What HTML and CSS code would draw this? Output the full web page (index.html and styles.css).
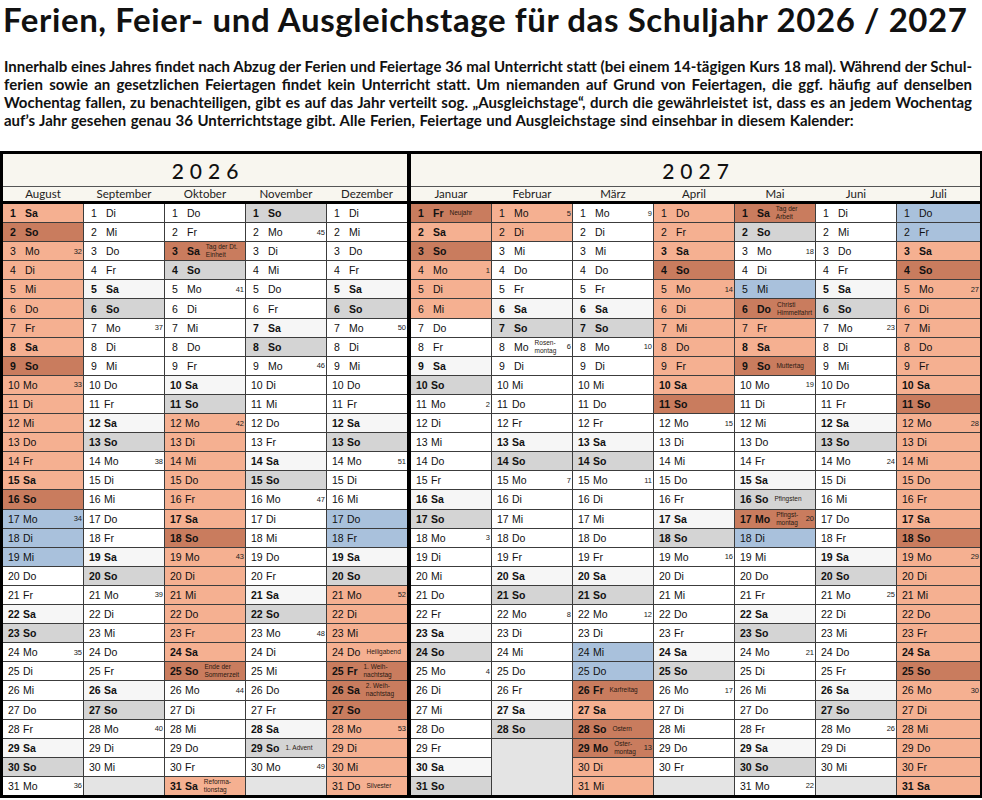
FILE: index.html
```html
<!DOCTYPE html>
<html lang="de">
<head>
<meta charset="utf-8">
<title>Ferien, Feier- und Ausgleichstage 2026 / 2027</title>
<link rel="stylesheet" href="styles.css">
</head>
<body>
<header class="intro">
  <h1 class="title">Ferien, Feier- und Ausgleichstage für das Schuljahr 2026 / 2027</h1>
  <p class="lead">
    <span class="jl">Innerhalb eines Jahres findet nach Abzug der Ferien und Feiertage 36 mal Unterricht statt (bei einem 14-tägigen Kurs 18 mal). Während der Schul-</span>
    <span class="jl">ferien sowie an gesetzlichen Feiertagen findet kein Unterricht statt. Um niemanden auf Grund von Feiertagen, die ggf. häufig auf denselben</span>
    <span class="jl">Wochentag fallen, zu benachteiligen, gibt es auf das Jahr verteilt sog. „Ausgleichstage“, durch die gewährleistet ist, dass es an jedem Wochentag</span>
    <span class="ll">auf’s Jahr gesehen genau 36 Unterrichtstage gibt. Alle Ferien, Feiertage und Ausgleichstage sind einsehbar in diesem Kalender:</span>
  </p>
</header>
<main class="cal">
  <section class="year y26">
    <div class="yh">2026</div>
    <div class="mh">
      <div>August</div><div>September</div><div>Oktober</div><div>November</div><div>Dezember</div>
    </div>
    <div class="days" data-months="2026-8,2026-9,2026-10,2026-11,2026-12"></div>
  </section>
  <section class="year y27">
    <div class="yh">2027</div>
    <div class="mh">
      <div>Januar</div><div>Februar</div><div>März</div><div>April</div><div>Mai</div><div>Juni</div><div>Juli</div>
    </div>
    <div class="days" data-months="2027-1,2027-2,2027-3,2027-4,2027-5,2027-6,2027-7"></div>
  </section>
</main>
<script src="script.js"></script>
</body>
</html>
```

FILE: styles.css
```css
html, body {
  margin: 0;
  padding: 0;
  background: #fff;
}
body {
  width: 982px;
  color: #111;
  font-family: "Lato", "Liberation Sans", sans-serif;
}
.intro {
  padding: 0 10px 0 3px;
}
.title {
  margin: 0;
  font-size: 33px;
  line-height: 38px;
  letter-spacing: 0.6px;
  font-weight: 700;
  white-space: nowrap;
}
.lead {
  margin: 19px 0 0 1px;
  font-size: 15px;
  line-height: 18px;
  font-weight: 700;
}
.jl {
  display: block;
  text-align: justify;
  text-align-last: justify;
}
.ll {
  display: block;
  word-spacing: 0.8px;
}
.cal {
  margin-top: 22px;
  display: flex;
  gap: 4px;
  box-sizing: border-box;
  width: 982px;
  border: 3px solid #000;
  border-right-width: 2px;
  background: #000;
}
.year {
  display: flex;
  flex-direction: column;
}
.y26 { width: 404px; }
.y27 { flex: 1; }
.yh {
  height: 32px;
  background: #f8f6ef;
  border-bottom: 1px solid #555;
  display: flex;
  align-items: center;
  justify-content: center;
  font-size: 21px;
  font-weight: 500;
  letter-spacing: 6px;
  padding-left: 6px;
  color: #111;
}
.mh {
  height: 14px;
  background: #f8f6ef;
  border-bottom: 3px solid #000;
  display: grid;
  column-gap: 1px;
  font-size: 11.5px;
  line-height: 14px;
  color: #222;
}
.mh div { text-align: center; }
.y26 .mh, .y26 .days { grid-template-columns: repeat(5, 1fr); }
.y27 .mh, .y27 .days { grid-template-columns: repeat(6, 80px) 1fr; }
.days {
  display: grid;
  grid-template-rows: repeat(31, 1fr);
  grid-auto-flow: column;
  gap: 1px;
  height: 591px;
  background: #3c3c3c;
}
.c {
  display: flex;
  align-items: center;
  padding-left: 5px;
  background: #fff;
  font-family: "Liberation Sans", Arial, sans-serif;
  font-size: 10.5px;
  color: #111;
  overflow: hidden;
  min-height: 0;
}
.c .n {
  flex: 0 0 15px;
}
.c .n.s {
  flex-basis: 15px;
  padding-left: 2px;
}
.c.b .n, .c.b .w { font-weight: 700; }
.c .lb {
  margin-left: 6px;
  font-size: 6.5px;
  line-height: 8px;
  color: #2a1a12;
  white-space: nowrap;
}
.c .k {
  margin-left: auto;
  padding-right: 1px;
  font-size: 7.5px;
  color: #222;
}
.c.sa { background: #f6f6f6; }
.c.so { background: #d4d4d4; }
.c.f { background: #f5b091; }
.c.d { background: #c97c5e; }
.c.bl { background: #a9c1dc; }
.c.e { background: #e4e4e4; }
```

FILE: script.js
```js
(function () {
  var WD = ['So', 'Mo', 'Di', 'Mi', 'Do', 'Fr', 'Sa'];
  function t(y, m, d) { return Date.UTC(y, m - 1, d); }
  var ferien = [
    [t(2026, 8, 1), t(2026, 8, 16)],
    [t(2026, 10, 12), t(2026, 10, 25)],
    [t(2026, 10, 31), t(2026, 10, 31)],
    [t(2026, 12, 21), t(2027, 1, 6)],
    [t(2027, 2, 1), t(2027, 2, 2)],
    [t(2027, 3, 26), t(2027, 4, 11)],
    [t(2027, 5, 7), t(2027, 5, 9)],
    [t(2027, 7, 3), t(2027, 7, 31)]
  ];
  var holidays = ['2026-10-3', '2026-12-25', '2026-12-26', '2027-1-1', '2027-3-26', '2027-3-29', '2027-5-1', '2027-5-6', '2027-5-17'];
  var blue = ['2026-8-17', '2026-8-18', '2026-8-19', '2026-12-17', '2026-12-18', '2027-3-24', '2027-3-25', '2027-5-5', '2027-5-18', '2027-7-1', '2027-7-2'];
  var labels = {
    '2026-10-3': 'Tag der Dt.<br>Einheit',
    '2026-10-25': 'Ende der<br>Sommerzeit',
    '2026-10-31': 'Reforma-<br>tionstag',
    '2026-11-29': '1. Advent',
    '2026-12-24': 'Heiligabend',
    '2026-12-25': '1. Weih-<br>nachtstag',
    '2026-12-26': '2. Weih-<br>nachtstag',
    '2026-12-31': 'Silvester',
    '2027-1-1': 'Neujahr',
    '2027-2-8': 'Rosen-<br>montag',
    '2027-3-26': 'Karfreitag',
    '2027-3-28': 'Ostern',
    '2027-3-29': 'Oster-<br>montag',
    '2027-5-1': 'Tag der<br>Arbeit',
    '2027-5-6': 'Christi<br>Himmelfahrt',
    '2027-5-9': 'Muttertag',
    '2027-5-16': 'Pfingsten',
    '2027-5-17': 'Pfingst-<br>montag'
  };
  function isoWeek(ms) {
    var d = new Date(ms);
    var day = d.getUTCDay() || 7;
    d.setUTCDate(d.getUTCDate() + 4 - day);
    var ys = Date.UTC(d.getUTCFullYear(), 0, 1);
    return Math.ceil(((d.getTime() - ys) / 86400000 + 1) / 7);
  }
  function inFerien(ms) {
    for (var i = 0; i < ferien.length; i++) {
      if (ms >= ferien[i][0] && ms <= ferien[i][1]) return true;
    }
    return false;
  }
  var grids = document.querySelectorAll('.days');
  grids.forEach(function (grid) {
    var html = '';
    grid.getAttribute('data-months').split(',').forEach(function (ym) {
      var p = ym.split('-');
      var y = +p[0], m = +p[1];
      var len = new Date(Date.UTC(y, m, 0)).getUTCDate();
      for (var d = 1; d <= len; d++) {
        var ms = t(y, m, d);
        var wd = new Date(ms).getUTCDay();
        var key = y + '-' + m + '-' + d;
        var cls = 'c';
        var bold = (wd === 0 || wd === 6);
        var hol = holidays.indexOf(key) >= 0;
        if (hol) { cls += ' d'; bold = true; }
        else if (blue.indexOf(key) >= 0) cls += ' bl';
        else if (inFerien(ms)) cls += (wd === 0 ? ' d' : ' f');
        else if (wd === 0) cls += ' so';
        else if (wd === 6) cls += ' sa';
        if (bold) cls += ' b';
        html += '<div class="' + cls + '"><span class="n' + (d < 10 ? ' s' : '') + '">' + d + '</span><span class="w">' + WD[wd] + '</span>';
        if (labels[key]) html += '<span class="lb">' + labels[key] + '</span>';
        if (wd === 1) html += '<span class="k">' + isoWeek(ms) + '</span>';
        html += '</div>';
      }
      if (len < 31) {
        html += '<div class="c e" style="grid-row: span ' + (31 - len) + '"></div>';
      }
    });
    grid.innerHTML = html;
  });
})();
```
